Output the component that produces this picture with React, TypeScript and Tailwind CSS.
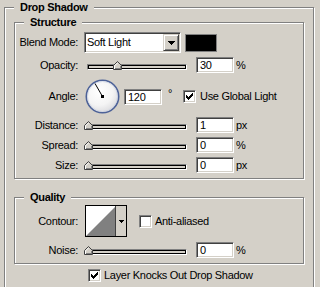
import React from "react";

const SUNKEN =
  "border border-t-[#808080] border-l-[#808080] border-r-white border-b-white shadow-[inset_1px_1px_0_#404040,inset_-1px_-1px_0_#d4d0c8]";
const RAISED =
  "border border-t-[#d4d0c8] border-l-[#d4d0c8] border-r-[#404040] border-b-[#404040] shadow-[inset_1px_1px_0_#ffffff,inset_-1px_-1px_0_#808080]";
const GROUP =
  "border border-[#808080] shadow-[inset_1px_1px_0_#ffffff,1px_1px_0_#ffffff]";

const CHECK = ["......X", ".....XX", "X...XXX", "XX.XXX.", "XXXXX..", ".XXX...", "..X...."];

function CheckMark() {
  const rects: React.ReactElement[] = [];
  CHECK.forEach((row, y) =>
    row.split("").forEach((c, x) => {
      if (c === "X") rects.push(<rect key={`${x}-${y}`} x={x} y={y} width={1} height={1} fill="#000" />);
    })
  );
  return (
    <svg width="7" height="7" viewBox="0 0 7 7" shapeRendering="crispEdges">
      {rects}
    </svg>
  );
}

function CheckBox({ checked }: { checked: boolean }) {
  return (
    <div className={`w-[13px] h-[13px] shrink-0 bg-white flex items-center justify-center ${SUNKEN}`}>
      {checked ? <CheckMark /> : null}
    </div>
  );
}

function NumBox({ value }: { value: string }) {
  return (
    <div className={`w-[38px] h-[16px] shrink-0 bg-white pl-[3px] leading-[14px] ${SUNKEN}`}>{value}</div>
  );
}

function Thumb() {
  return (
    <svg width="9" height="9" viewBox="0 0 9 9" shapeRendering="crispEdges">
      <polygon points="4.5,0.5 8.5,4.5 8.5,8.5 0.5,8.5 0.5,4.5" fill="#d4d0c8" stroke="#404040" strokeWidth="1" shapeRendering="auto" />
      <polyline points="1.5,8 1.5,4.9 4.5,1.9" fill="none" stroke="#ffffff" strokeWidth="1" shapeRendering="auto" />
      <polyline points="7.5,5 7.5,7.5 1.5,7.5" fill="none" stroke="#808080" strokeWidth="1" />
    </svg>
  );
}

function Slider({ value }: { value: number }) {
  const left = Math.round((value / 100) * 98);
  return (
    <div className="relative w-[106px] h-[16px] shrink-0 flex items-end pb-[3px]">
      <div className="mx-[3px] flex-1 h-[6px] border-t border-l border-t-[#808080] border-l-[#808080] border-b border-r border-b-white border-r-white">
        <div className="h-[4px] border border-black bg-[#d4d0c8]" />
      </div>
      <div className="absolute bottom-[3px] flex" style={{ left }}>
        <Thumb />
      </div>
    </div>
  );
}

function Label({ children }: { children: React.ReactNode }) {
  return <div className="w-[64px] shrink-0 text-right pr-[1px]">{children}</div>;
}

function Title({ children, className }: { children: React.ReactNode; className: string }) {
  return (
    <div className={`-mt-[8px] w-fit h-[15px] leading-[15px] bg-[#d4d0c8] font-bold ${className}`}>{children}</div>
  );
}

function Dial() {
  const cx = 17.5;
  const cy = 17.5;
  const r = 13.5;
  const a = (120 * Math.PI) / 180;
  const ex = cx + Math.cos(a) * 15;
  const ey = cy - Math.sin(a) * 15;
  return (
    <svg width="35" height="35" viewBox="0 0 35 35">
      <defs>
        <radialGradient id="dialg" cx="0.4" cy="0.35" r="0.7">
          <stop offset="0" stopColor="#ffffff" />
          <stop offset="0.6" stopColor="#f4f4f4" />
          <stop offset="1" stopColor="#d8d8dc" />
        </radialGradient>
      </defs>
      <circle cx={cx} cy={cy} r={16.2} fill="url(#dialg)" stroke="#4d6298" strokeWidth="1.6" />
      <circle cx={cx} cy={cy} r={r + 1.5} fill="none" stroke="#c8d0e0" strokeWidth="0.6" />
      <line x1={cx} y1={cy} x2={ex} y2={ey} stroke="#000" strokeWidth="1" />
      <rect x={cx - 1.5} y={cy - 1.5} width="3" height="3" fill="#000" />
    </svg>
  );
}

function Arrow() {
  return (
    <svg width="7" height="4" viewBox="0 0 7 4" shapeRendering="crispEdges">
      <rect x="0" y="0" width="7" height="1" fill="#000" />
      <rect x="1" y="1" width="5" height="1" fill="#000" />
      <rect x="2" y="2" width="3" height="1" fill="#000" />
      <rect x="3" y="3" width="1" height="1" fill="#000" />
    </svg>
  );
}

function SmallArrow() {
  return (
    <svg width="5" height="3" viewBox="0 0 5 3" shapeRendering="crispEdges">
      <rect x="0" y="0" width="5" height="1" fill="#000" />
      <rect x="1" y="1" width="3" height="1" fill="#000" />
      <rect x="2" y="2" width="1" height="1" fill="#000" />
    </svg>
  );
}

export default function App() {
  return (
    <div
      className="w-[320px] h-[287px] overflow-hidden bg-[#d4d0c8] text-black text-[11px] tracking-[-0.3px] pt-[7px]"
      style={{ fontFamily: '"Liberation Sans", Arial, sans-serif' }}
    >
      <div className={`ml-[4px] w-[310px] pb-[14px] ${GROUP}`}>
        <Title className="ml-[9px] px-[6px]">Drop Shadow</Title>

        {/* Structure */}
        <div className={`mx-[9px] mt-[7px] pb-[5px] ${GROUP}`}>
          <Title className="ml-[9px] px-[6px]">Structure</Title>

          <div className="mt-[2px] h-[21px] flex items-center">
            <Label>Blend Mode:</Label>
            <div className={`ml-[5px] w-[97px] h-[21px] p-[1px] bg-white flex ${SUNKEN}`}>
              <div className="flex-1 pl-[1px] leading-[17px]">Soft Light</div>
              <div className={`w-[16px] h-[17px] bg-[#d4d0c8] flex items-center justify-center ${RAISED}`}>
                <Arrow />
              </div>
            </div>
            <div className="ml-[4px] w-[32px] h-[18px] border border-[#808080] bg-black" />
          </div>

          <div className="mt-[4px] h-[16px] flex items-center">
            <Label>Opacity:</Label>
            <div className="ml-[5px] flex items-center">
              <Slider value={30} />
              <div className="ml-[6px]">
                <NumBox value="30" />
              </div>
              <div className="ml-[2px]">%</div>
            </div>
          </div>

          <div className="mt-[6px] h-[35px] flex items-center">
            <Label>Angle:</Label>
            <div className="ml-[6px] flex">
              <Dial />
            </div>
            <div className="ml-[4px]">
              <NumBox value="120" />
            </div>
            <div className="ml-[4px] w-[16px] pl-[2px] self-start mt-[9px] leading-[11px]">°</div>
            <div className="ml-[1px]">
              <CheckBox checked />
            </div>
            <div className="ml-[4px]">Use Global Light</div>
          </div>

          {[
            ["Distance:", 0, "1", "px"],
            ["Spread:", 0, "0", "%"],
            ["Size:", 0, "0", "px"],
          ].map(([label, v, n, u], i) => (
            <div key={label as string} className={`${i === 0 ? "mt-[3px]" : "mt-[4px]"} h-[16px] flex items-center`}>
              <Label>{label}</Label>
              <div className="ml-[5px] flex items-center">
                <Slider value={v as number} />
                <div className="ml-[6px]">
                  <NumBox value={n as string} />
                </div>
                <div className="ml-[2px]">{u}</div>
              </div>
            </div>
          ))}
        </div>

        {/* Quality */}
        <div className={`mx-[9px] mt-[18px] pb-[5px] ${GROUP}`}>
          <Title className="ml-[9px] px-[6px]">Quality</Title>

          <div className="h-[32px] flex items-center">
            <Label>Contour:</Label>
            <div className="ml-[6px] w-[42px] h-[32px] border border-black flex">
              <svg width="29" height="30" viewBox="0 0 29 30" shapeRendering="crispEdges" className="bg-white">
                <polygon points="0,30 29,1 29,30" fill="#808080" shapeRendering="auto" />
              </svg>
              <div className="flex-1 bg-[#d4d0c8] border-l border-[#404040] flex items-center justify-center">
                <SmallArrow />
              </div>
            </div>
            <div className="ml-[12px]">
              <CheckBox checked={false} />
            </div>
            <div className="ml-[3px]">Anti-aliased</div>
          </div>

          <div className="mt-[5px] h-[16px] flex items-center">
            <Label>Noise:</Label>
            <div className="ml-[5px] flex items-center">
              <Slider value={0} />
              <div className="ml-[6px]">
                <NumBox value="0" />
              </div>
              <div className="ml-[2px]">%</div>
            </div>
          </div>
        </div>

        <div className="mt-[5px] h-[13px] flex items-center pl-[83px]">
          <CheckBox checked />
          <div className="ml-[3px]">Layer Knocks Out Drop Shadow</div>
        </div>
      </div>
    </div>
  );
}
